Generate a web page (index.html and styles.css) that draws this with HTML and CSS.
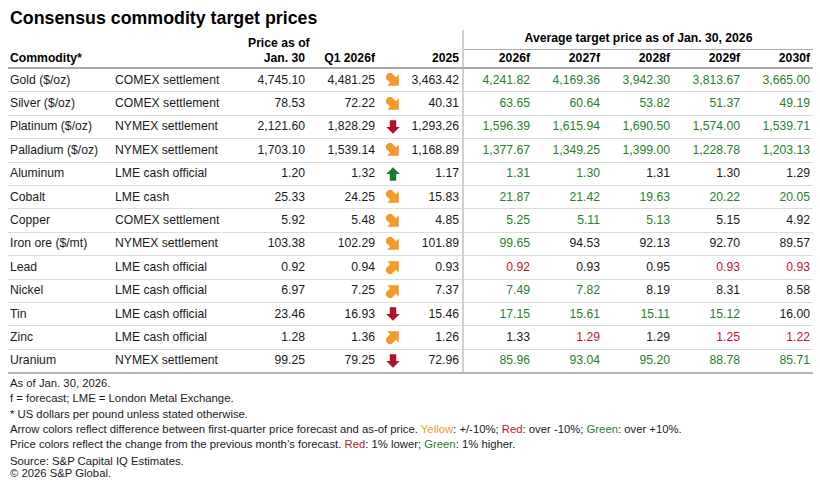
FILE: index.html
```html
<!DOCTYPE html>
<html>
<head>
<meta charset="utf-8">
<link rel="stylesheet" href="styles.css">
</head>
<body>
<svg class="defs" width="0" height="0">
  <defs>
    <path id="arr" d="M7 0.3 L13.7 7 L10.2 7 L10.2 13.7 L3.8 13.7 L3.8 7 L0.3 7 Z"/>
    <path id="arrd" d="M7 -1.2 L15.2 7 L11 7 L11 15.2 L3 15.2 L3 7 L-1.2 7 Z"/>
  </defs>
</svg>
<div class="wrap">
  <h1 class="title">Consensus commodity target prices</h1>
  <table class="grid">
    <colgroup>
      <col class="c-name"><col class="c-ex"><col class="c-px"><col class="c-q1"><col class="c-ar"><col class="c-25">
      <col class="c-f"><col class="c-f"><col class="c-f"><col class="c-f"><col class="c-f">
    </colgroup>
    <thead>
      <tr class="h1">
        <th></th><th></th><th class="num">Price as of</th><th></th><th></th><th></th>
        <th colspan="5" class="avg">Average target price as of Jan. 30, 2026</th>
      </tr>
      <tr class="h2">
        <th class="txt">Commodity*</th><th></th><th class="num">Jan. 30</th><th class="num">Q1 2026f</th><th></th><th class="num">2025</th>
        <th class="num sep">2026f</th><th class="num">2027f</th><th class="num">2028f</th><th class="num">2029f</th><th class="num">2030f</th>
      </tr>
    </thead>
    <tbody>
      <tr><td>Gold ($/oz)</td><td>COMEX settlement</td><td class="num">4,745.10</td><td class="num">4,481.25</td><td class="ar"><svg class="ic y" viewBox="0 0 14 14"><use href="#arrd" transform="rotate(135 7 7)"/></svg></td><td class="num">3,463.42</td><td class="num sep g">4,241.82</td><td class="num g">4,169.36</td><td class="num g">3,942.30</td><td class="num g">3,813.67</td><td class="num g">3,665.00</td></tr>
      <tr><td>Silver ($/oz)</td><td>COMEX settlement</td><td class="num">78.53</td><td class="num">72.22</td><td class="ar"><svg class="ic y" viewBox="0 0 14 14"><use href="#arrd" transform="rotate(135 7 7)"/></svg></td><td class="num">40.31</td><td class="num sep g">63.65</td><td class="num g">60.64</td><td class="num g">53.82</td><td class="num g">51.37</td><td class="num g">49.19</td></tr>
      <tr><td>Platinum ($/oz)</td><td>NYMEX settlement</td><td class="num">2,121.60</td><td class="num">1,828.29</td><td class="ar"><svg class="ic r" viewBox="0 0 14 14"><use href="#arr" transform="rotate(180 7 7)"/></svg></td><td class="num">1,293.26</td><td class="num sep g">1,596.39</td><td class="num g">1,615.94</td><td class="num g">1,690.50</td><td class="num g">1,574.00</td><td class="num g">1,539.71</td></tr>
      <tr><td>Palladium ($/oz)</td><td>NYMEX settlement</td><td class="num">1,703.10</td><td class="num">1,539.14</td><td class="ar"><svg class="ic y" viewBox="0 0 14 14"><use href="#arrd" transform="rotate(135 7 7)"/></svg></td><td class="num">1,168.89</td><td class="num sep g">1,377.67</td><td class="num g">1,349.25</td><td class="num g">1,399.00</td><td class="num g">1,228.78</td><td class="num g">1,203.13</td></tr>
      <tr><td>Aluminum</td><td>LME cash official</td><td class="num">1.20</td><td class="num">1.32</td><td class="ar"><svg class="ic gr" viewBox="0 0 14 14"><use href="#arr"/></svg></td><td class="num">1.17</td><td class="num sep g">1.31</td><td class="num g">1.30</td><td class="num">1.31</td><td class="num">1.30</td><td class="num">1.29</td></tr>
      <tr><td>Cobalt</td><td>LME cash</td><td class="num">25.33</td><td class="num">24.25</td><td class="ar"><svg class="ic y" viewBox="0 0 14 14"><use href="#arrd" transform="rotate(135 7 7)"/></svg></td><td class="num">15.83</td><td class="num sep g">21.87</td><td class="num g">21.42</td><td class="num g">19.63</td><td class="num g">20.22</td><td class="num g">20.05</td></tr>
      <tr><td>Copper</td><td>COMEX settlement</td><td class="num">5.92</td><td class="num">5.48</td><td class="ar"><svg class="ic y" viewBox="0 0 14 14"><use href="#arrd" transform="rotate(135 7 7)"/></svg></td><td class="num">4.85</td><td class="num sep g">5.25</td><td class="num g">5.11</td><td class="num g">5.13</td><td class="num">5.15</td><td class="num">4.92</td></tr>
      <tr><td>Iron ore ($/mt)</td><td>NYMEX settlement</td><td class="num">103.38</td><td class="num">102.29</td><td class="ar"><svg class="ic y" viewBox="0 0 14 14"><use href="#arrd" transform="rotate(135 7 7)"/></svg></td><td class="num">101.89</td><td class="num sep g">99.65</td><td class="num">94.53</td><td class="num">92.13</td><td class="num">92.70</td><td class="num">89.57</td></tr>
      <tr><td>Lead</td><td>LME cash official</td><td class="num">0.92</td><td class="num">0.94</td><td class="ar"><svg class="ic y" viewBox="0 0 14 14"><use href="#arrd" transform="rotate(45 7 7)"/></svg></td><td class="num">0.93</td><td class="num sep rd">0.92</td><td class="num">0.93</td><td class="num">0.95</td><td class="num rd">0.93</td><td class="num rd">0.93</td></tr>
      <tr><td>Nickel</td><td>LME cash official</td><td class="num">6.97</td><td class="num">7.25</td><td class="ar"><svg class="ic y" viewBox="0 0 14 14"><use href="#arrd" transform="rotate(45 7 7)"/></svg></td><td class="num">7.37</td><td class="num sep g">7.49</td><td class="num g">7.82</td><td class="num">8.19</td><td class="num">8.31</td><td class="num">8.58</td></tr>
      <tr><td>Tin</td><td>LME cash official</td><td class="num">23.46</td><td class="num">16.93</td><td class="ar"><svg class="ic r" viewBox="0 0 14 14"><use href="#arr" transform="rotate(180 7 7)"/></svg></td><td class="num">15.46</td><td class="num sep g">17.15</td><td class="num g">15.61</td><td class="num g">15.11</td><td class="num g">15.12</td><td class="num">16.00</td></tr>
      <tr><td>Zinc</td><td>LME cash official</td><td class="num">1.28</td><td class="num">1.36</td><td class="ar"><svg class="ic y" viewBox="0 0 14 14"><use href="#arrd" transform="rotate(45 7 7)"/></svg></td><td class="num">1.26</td><td class="num sep">1.33</td><td class="num rd">1.29</td><td class="num">1.29</td><td class="num rd">1.25</td><td class="num rd">1.22</td></tr>
      <tr class="last"><td>Uranium</td><td>NYMEX settlement</td><td class="num">99.25</td><td class="num">79.25</td><td class="ar"><svg class="ic r" viewBox="0 0 14 14"><use href="#arr" transform="rotate(180 7 7)"/></svg></td><td class="num">72.96</td><td class="num sep g">85.96</td><td class="num g">93.04</td><td class="num g">95.20</td><td class="num g">88.78</td><td class="num g">85.71</td></tr>
    </tbody>
  </table>
  <div class="notes">
    <p>As of Jan. 30, 2026.</p>
    <p>f = forecast; LME = London Metal Exchange.</p>
    <p>* US dollars per pound unless stated otherwise.</p>
    <p>Arrow colors reflect difference between first-quarter price forecast and as-of price. <span class="t-y">Yellow</span>: +/-10%; <span class="t-r">Red</span>: over -10%; <span class="t-g">Green</span>: over +10%.</p>
    <p>Price colors reflect the change from the previous month’s forecast. <span class="t-r">Red</span>: 1% lower; <span class="t-g">Green</span>: 1% higher.</p>
    <p class="src">Source: S&amp;P Capital IQ Estimates.<br>© 2026 S&amp;P Global.</p>
  </div>
</div>
</body>
</html>
```

FILE: styles.css
```css
html, body {
  margin: 0;
  padding: 0;
  background: #ffffff;
}
body {
  font-family: "Liberation Sans", Arial, sans-serif;
  color: #1a1a1a;
}
.defs {
  position: absolute;
  width: 0;
  height: 0;
}
.wrap {
  padding: 6px 7px 0 8px;
}
.title {
  margin: 0 0 0 2px;
  font-size: 17.8px;
  font-weight: bold;
  line-height: 24px;
  color: #000;
}
.grid {
  border-collapse: collapse;
  table-layout: fixed;
  width: 805px;
  font-size: 12.2px;
  margin-top: 0;
}
.c-name { width: 104px; }
.c-ex { width: 133px; }
.c-px { width: 63px; }
.c-q1 { width: 70px; }
.c-ar { width: 26px; }
.c-25 { width: 59px; }
.c-f { width: 70px; }

.grid th {
  font-weight: bold;
  color: #000;
  padding: 0 3px;
  white-space: nowrap;
}
.grid th.txt { text-align: left; padding-left: 2px; }
.grid .h1 th {
  height: 18px;
  vertical-align: bottom;
  line-height: 14px;
}
.grid .h1 th.avg {
  text-align: center;
  vertical-align: top;
  border-bottom: 1px solid #a9a9a9;
  border-left: 2px solid #cfcfcf;
  line-height: 15px;
  padding-top: 1px;
}
.grid .h2 th {
  height: 17px;
  line-height: 15px;
  vertical-align: middle;
  border-bottom: 2px solid #a9a9a9;
}
.grid td {
  height: 22.4px;
  padding: 0 3px;
  line-height: 15px;
  border-bottom: 1px solid #dcdcdc;
  white-space: nowrap;
  color: #1a1a1a;
}
.grid td:first-child { padding-left: 2px; }
.grid tr.last td { border-bottom: 2px solid #b5b5b5; }
.num { text-align: right; }
.sep { border-left: 2px solid #cfcfcf; }
.ar { text-align: center; }
.ic {
  width: 14px;
  height: 14px;
  display: block;
  margin: 0 auto 0 5px;
}
.ic.y { fill: #f39a2b; }
.ic.r { fill: #b0102a; }
.ic.gr { fill: #1b7a2f; }
.grid td.g { color: #2a7d2e; }
.grid td.rd { color: #c0142e; }

.notes {
  font-size: 11.3px;
  color: #1a1a1a;
  padding-left: 2px;
  margin-top: 2px;
}
.notes p {
  margin: 0;
  line-height: 15.3px;
}
.notes p.src {
  line-height: 12.5px;
  margin-top: 2px;
}
.t-y { color: #f39a2b; }
.t-r { color: #c0142e; }
.t-g { color: #2a7d2e; }
```
